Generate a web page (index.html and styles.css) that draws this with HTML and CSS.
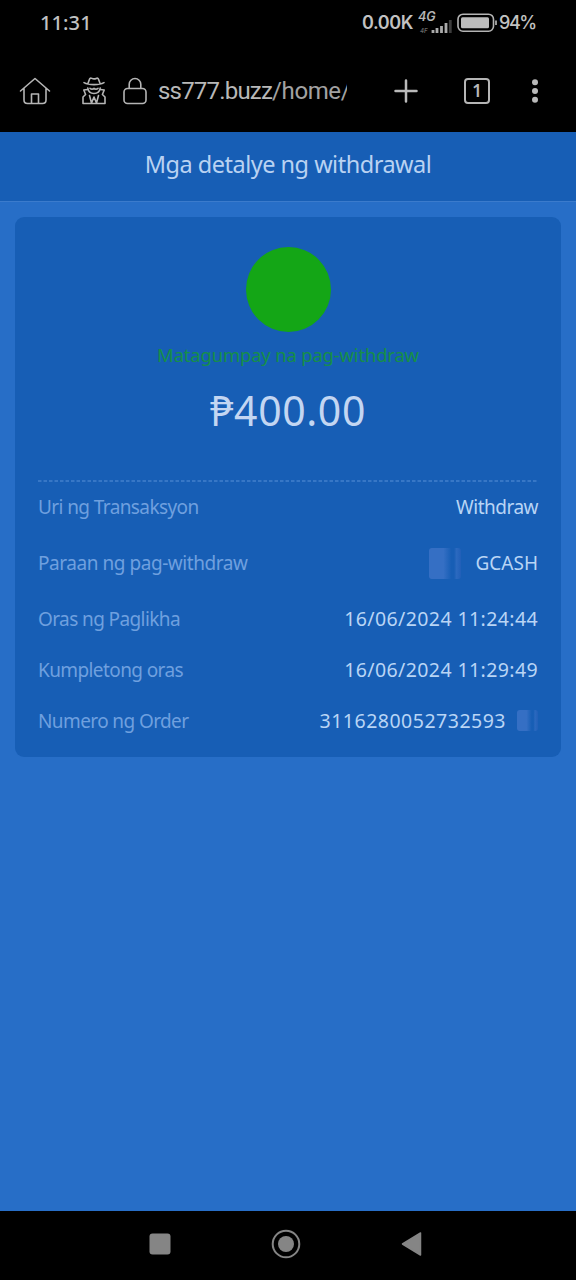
FILE: index.html
```html
<!DOCTYPE html>
<html lang="fil">
<head>
<meta charset="utf-8">
<title>Mga detalye ng withdrawal</title>
<link rel="stylesheet" href="styles.css">
</head>
<body>
<div class="status">
  <span class="clock">11:31</span>
  <div class="indicators">
    <span class="speed">0.00K</span>
    <svg class="signal" width="36" height="30" viewBox="0 0 36 30">
      <text class="net" x="0" y="14">4G</text>
      <text class="net-sub" x="2" y="26">4F</text>
      <path d="M15 26v-3M19 26v-5M23.5 26v-7M28 26v-10" stroke="#aaa" stroke-width="2.8"/>
      <path d="M32.3 26V13" stroke="#3d3d3d" stroke-width="2.8"/>
    </svg>
    <svg class="battery" width="42" height="20" viewBox="0 0 42 20">
      <rect x="1" y="1.2" width="35.5" height="17" rx="5" fill="none" stroke="#b4b4b4" stroke-width="1.6"/>
      <rect x="4" y="4.2" width="28" height="11" rx="1.5" fill="#bcbcbc"/>
      <path d="M39 7.5v4.5" stroke="#aaa" stroke-width="1.8"/>
    </svg>
    <span class="percent">94%</span>
  </div>
</div>
<div class="toolbar">
  <svg class="home" width="32" height="28" viewBox="0 0 32 28" fill="none" stroke="#b5b5b5" stroke-width="1.6" stroke-linecap="round" stroke-linejoin="round">
    <path d="M1.5 14 16 1.5 30.500 14M5 11.500V23q0 3.500 3.500 3.500h15q3.500 0 3.500-3.500V11.500M12.500 26.500v-9.500h7v9.500"/>
  </svg>
  <svg class="agent" width="24" height="28" viewBox="0 0 24 28" fill="none" stroke="#b5b5b5" stroke-width="1.6" stroke-linecap="round" stroke-linejoin="round">
    <path d="M6 6.300 7.500 2.200q.6-1.600 2.300-.8 2.200 1 4.400 0 1.700-.8 2.300.8L18 6.300M2 5.600q3.500 2 10 2t10-2M5.800 11q.7 5.500 6.200 5.500t6.200-5.500M8 11.300q2 1.800 4 0 2 1.800 4 0"/>
    <path d="M5.500 12.500 1.800 13l1.800 4.500L1 20v6.500h22V20l-2.600-2.500 1.800-4.500-3.700-.5M7.500 18.500l2 7.500L12 20l2.500 6 2-7.500"/>
  </svg>
  <svg class="lock" width="24" height="28" viewBox="0 0 24 28" fill="none" stroke="#b5b5b5" stroke-width="1.6">
    <rect x="1" y="11.500" width="22" height="15" rx="3.500"/><path d="M6.200 11.500V7.300a5.800 5.800 0 0 1 11.600 0v4.200"/>
  </svg>
  <div class="address">ss777.buzz<span class="path">/home/</span></div>
  <svg class="plus" width="24" height="24" viewBox="0 0 24 24" stroke="#bababa" stroke-width="2.500" stroke-linecap="round"><path d="M12 1.500v21M1.500 12h21"/></svg>
  <div class="tabs">1</div>
  <svg class="more" width="8" height="24" viewBox="0 0 8 24" fill="#bababa"><circle cx="4" cy="3.200" r="3"/><circle cx="4" cy="12" r="3"/><circle cx="4" cy="20.800" r="3"/></svg>
</div>
<header class="header"><h1 class="title">Mga detalye ng withdrawal</h1></header>
<main class="main">
  <section class="card">
    <div class="badge"></div>
    <p class="state">Matagumpay na pag-withdraw</p>
    <p class="amount">₱400.00</p>
    <svg class="divider" width="500" height="2"><path d="M0 1h500" stroke="#4380cb" stroke-width="1.500" stroke-dasharray="3.500 2"/></svg>
    <dl class="details">
      <div class="row"><dt class="type-label">Uri ng Transaksyon</dt><dd class="type">Withdraw</dd></div>
      <div class="row tall"><dt class="method-label">Paraan ng pag-withdraw</dt><dd><i class="placeholder large"></i>GCASH</dd></div>
      <div class="row"><dt>Oras ng Paglikha</dt><dd class="date">16/06/2024 11:24:44</dd></div>
      <div class="row"><dt>Kumpletong oras</dt><dd class="date">16/06/2024 11:29:49</dd></div>
      <div class="row"><dt>Numero ng Order</dt><dd class="order">3116280052732593<i class="placeholder small"></i></dd></div>
    </dl>
  </section>
</main>
<nav class="nav">
  <svg width="22" height="22" viewBox="0 0 22 22"><rect x=".5" y=".5" width="21" height="21" rx="3" fill="#858585"/></svg>
  <svg width="30" height="30" viewBox="0 0 30 30"><circle cx="15" cy="15" r="13.300" fill="none" stroke="#858585" stroke-width="2"/><circle cx="15" cy="15" r="8" fill="#858585"/></svg>
  <svg width="21" height="26" viewBox="0 0 21 26"><path d="M1.500 13 19.500 2v22z" fill="#858585" stroke="#858585" stroke-width="1.500" stroke-linejoin="round"/></svg>
</nav>
</body>
</html>
```
FILE: styles.css
```css
* { box-sizing: border-box; }
body {
  margin: 0;
  width: 576px;
  height: 1280px;
  display: flex;
  flex-direction: column;
  background: #276ec7;
  font-family: "Noto Sans", sans-serif;
  overflow: hidden;
}
svg { flex: none; display: block; }
p, h1, dl, dd, dt { margin: 0; font-weight: 400; white-space: nowrap; }
.status {
  height: 50px;
  padding: 0 41px 4px 40px;
  display: flex;
  align-items: center;
  justify-content: space-between;
  background: #000;
  color: #c2c2c2;
}
.clock { font: 500 20px/24px "Noto Sans", sans-serif; letter-spacing: 0.1px; }
.indicators { display: flex; align-items: center; height: 30px; }
.speed { font: 600 18px/24px Inter, sans-serif; width: 56px; letter-spacing: -0.4px; }
.percent { font: 500 18px/24px Inter, sans-serif; width: 36px; letter-spacing: -1.4px; }
.signal { margin-top: -3px; }
.battery { margin-left: 3px; }
.net { font: italic 600 12.5px Inter, sans-serif; fill: #b5b5b5; }
.net-sub { font: italic 600 6px Inter, sans-serif; fill: #666; }
.toolbar {
  height: 82px;
  padding: 0 37px 0 19px;
  display: flex;
  align-items: center;
  background: #000;
  color: #b8b8b8;
}
.agent { margin-left: 31px; }
.lock { margin-left: 17px; }
.address {
  width: 189px;
  margin-left: 11px;
  overflow: hidden;
  white-space: nowrap;
  font: 400 24px/32px Roboto, sans-serif;
  letter-spacing: -0.8px;
}
.path { color: #a2a2a2; letter-spacing: -0.4px; }
.plus { margin-left: 47px; }
.tabs {
  width: 26px;
  height: 26px;
  margin-left: 46px;
  border: 2px solid #b5b5b5;
  border-radius: 4px;
  text-align: center;
  font: 600 17px/21px "Noto Sans", sans-serif;
}
.more { margin-left: auto; }
.header {
  height: 70px;
  padding-bottom: 5px;
  display: flex;
  align-items: center;
  justify-content: center;
  background: #175eb5;
  border-bottom: 1px solid #3b7bcc;
}
.title { color: #b9d2f2; font-size: 23.5px; line-height: 32px; letter-spacing: -0.5px; }
.main { flex: 1; padding: 15px 15px 0; }
.card {
  height: 540px;
  padding: 30px 23px 0;
  display: flex;
  flex-direction: column;
  align-items: center;
  border-radius: 9px;
  background: #175eb5;
}
.badge { width: 85px; height: 85px; flex: none; border-radius: 50%; background: #14a616; }
.state { margin-top: 9px; color: #168f48; font-size: 18.5px; line-height: 28px; letter-spacing: -0.2px; }
.amount { margin-top: 14px; color: #c3d6f2; font-size: 41px; line-height: 54px; letter-spacing: 0.6px; }
.divider { margin-top: 43px; }
.details { width: 100%; }
.row {
  height: 50.6px;
  display: flex;
  align-items: center;
  justify-content: space-between;
  font-size: 19px;
  line-height: 26px;
}
.tall { height: 61.5px; }
.row dt { color: #6fa0df; letter-spacing: -0.6px; }
.row dt.method-label { letter-spacing: -0.45px; }
.row dd { display: flex; align-items: center; color: #b9d5f5; }
.row .type { letter-spacing: -0.5px; }
.row .date { font-size: 19.5px; letter-spacing: 0.4px; }
.row .order { font-size: 19.5px; letter-spacing: 0.5px; }
.placeholder { display: block; border-radius: 3px; background: linear-gradient(90deg, #356fc4 0 45%, #175eb5 70% 78%, #2b69bf 86%, #215fb8); }
.large { width: 32px; height: 31px; margin-right: 15px; }
.small { width: 21px; height: 21px; margin-left: 11px; }
.nav {
  height: 69px;
  padding: 0 154px 3px 149px;
  display: flex;
  align-items: center;
  justify-content: space-between;
  background: #000;
}
```
